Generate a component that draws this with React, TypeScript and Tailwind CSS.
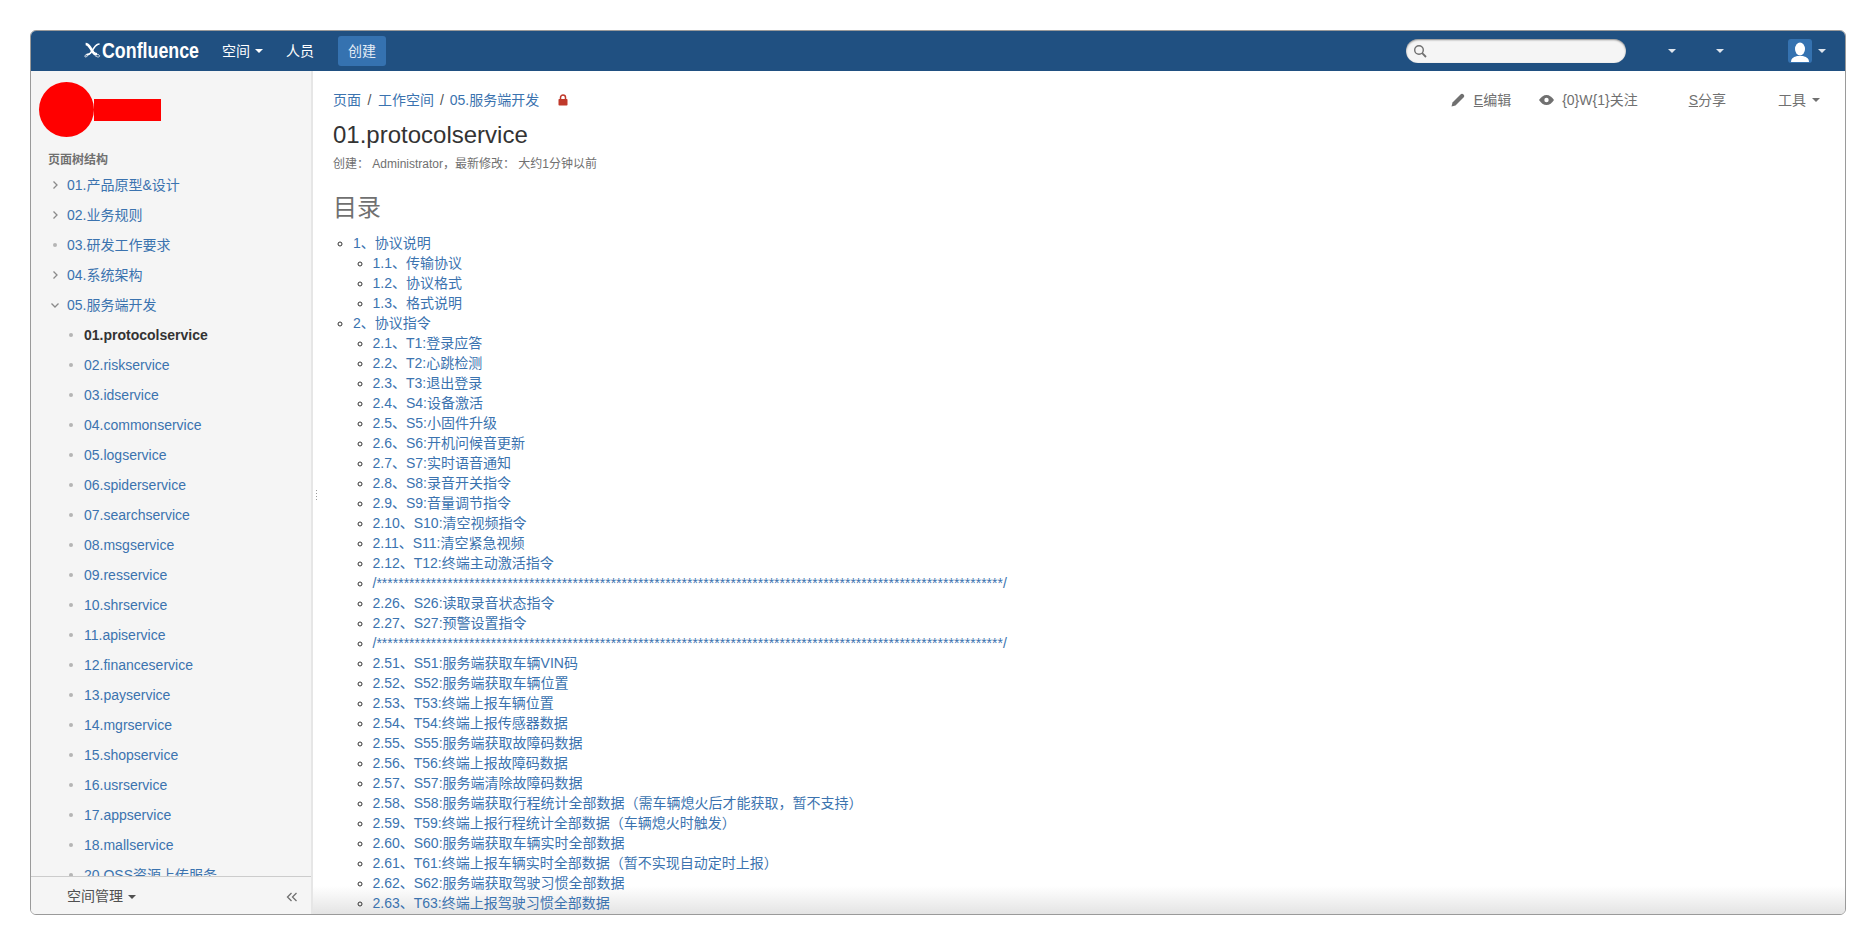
import React from "react";

const font = { fontFamily: '"Liberation Sans", "Noto Sans CJK SC", sans-serif' };

const treeTop: [string, "chev" | "dot" | "open"][] = [
  ["01.产品原型&设计", "chev"],
  ["02.业务规则", "chev"],
  ["03.研发工作要求", "dot"],
  ["04.系统架构", "chev"],
  ["05.服务端开发", "open"],
];
const treeSub = [
  "01.protocolservice", "02.riskservice", "03.idservice", "04.commonservice", "05.logservice",
  "06.spiderservice", "07.searchservice", "08.msgservice", "09.resservice", "10.shrservice",
  "11.apiservice", "12.financeservice", "13.payservice", "14.mgrservice", "15.shopservice",
  "16.usrservice", "17.appservice", "18.mallservice", "20.OSS资源上传服务",
];
const stars = "/" + "*".repeat(115) + "/";
const sec2 = [
  "2.1、T1:登录应答", "2.2、T2:心跳检测", "2.3、T3:退出登录", "2.4、S4:设备激活", "2.5、S5:小固件升级",
  "2.6、S6:开机问候音更新", "2.7、S7:实时语音通知", "2.8、S8:录音开关指令", "2.9、S9:音量调节指令",
  "2.10、S10:清空视频指令", "2.11、S11:清空紧急视频", "2.12、T12:终端主动激活指令", stars,
  "2.26、S26:读取录音状态指令", "2.27、S27:预警设置指令", stars, "2.51、S51:服务端获取车辆VIN码",
  "2.52、S52:服务端获取车辆位置", "2.53、T53:终端上报车辆位置", "2.54、T54:终端上报传感器数据",
  "2.55、S55:服务端获取故障码数据", "2.56、T56:终端上报故障码数据", "2.57、S57:服务端清除故障码数据",
  "2.58、S58:服务端获取行程统计全部数据（需车辆熄火后才能获取，暂不支持）",
  "2.59、T59:终端上报行程统计全部数据（车辆熄火时触发）", "2.60、S60:服务端获取车辆实时全部数据",
  "2.61、T61:终端上报车辆实时全部数据（暂不实现自动定时上报）", "2.62、S62:服务端获取驾驶习惯全部数据",
  "2.63、T63:终端上报驾驶习惯全部数据",
];

function Caret({ color = "border-t-white" }: { color?: string }) {
  return <span className={`inline-block w-0 h-0 border-x-[4px] border-x-transparent border-t-[4px] ${color}`} />;
}

function TreeIcon({ kind }: { kind: "chev" | "dot" | "open" }) {
  if (kind === "dot") return <span className="w-[4px] h-[4px] mx-[3px] rounded-full bg-[#b5b5b5]" />;
  return (
    <svg width="10" height="10" viewBox="0 0 10 10" fill="none" stroke="#8a8a8a" strokeWidth="1.3">
      {kind === "chev" ? <path d="M3.5 1.5 7 5 3.5 8.5" /> : <path d="M1.5 3.5 5 7 8.5 3.5" />}
    </svg>
  );
}

export default function App() {
  return (
    <div className="min-h-[945px] bg-white pt-[30px] pl-[30px] pr-[30px]" style={font}>
      <div className="h-[885px] border border-[#9a9a9a] rounded-[6px] overflow-hidden flex flex-col">
        <header className="h-[40px] shrink-0 bg-[#205081] flex items-center text-white text-[14px]">
          <div className="flex items-center ml-[53px] w-[138px] shrink-0 whitespace-nowrap">
            <svg width="23" height="20" viewBox="0 0 21 19" fill="none" stroke="white">
              <path d="M2 1c3 0 4 2 6 5l3 5c1 1.500 3 2.500 5 2.500" strokeWidth="3.200" />
              <path d="M19 1c-3 0-5 2-7 5l-4 6c-1 1.500-3 2-5 2" strokeWidth="2" />
              <path d="M6 13c-1 3-5 5-5 3s2-2 5-3zM12 13c1 3 6 5 7 3s-3-2.500-7-3z" strokeWidth="1" />
            </svg>
            <span className="text-[22px] font-bold leading-none ml-[1px] scale-x-[0.81] origin-left">Confluence</span>
          </div>
          <span>空间</span>
          <span className="ml-[5px] flex"><Caret /></span>
          <span className="ml-[23px]">人员</span>
          <span className="ml-[24px] w-[48px] h-[30px] rounded-[3px] bg-[#3572b0] flex items-center justify-center text-[#e4edf6]">创建</span>
          <div className="ml-auto w-[220px] h-[24px] rounded-[12px] bg-[#f5f5f5] shadow-[inset_0_1px_2px_rgba(0,0,0,0.45)] flex items-center pl-[7px]">
            <svg width="15" height="15" viewBox="0 0 15 15" fill="none" stroke="#707070" strokeWidth="1.4">
              <circle cx="6" cy="6" r="4.3" />
              <path d="M9.2 9.2 13 13" strokeWidth="1.8" />
            </svg>
          </div>
          <span className="ml-[42px] flex"><Caret color="border-t-[#dfe6ee]" /></span>
          <span className="ml-[40px] flex"><Caret color="border-t-[#dfe6ee]" /></span>
          <span className="ml-[64px] w-[24px] h-[24px] rounded-[3px] bg-[#3572b0] flex items-end justify-center overflow-hidden">
            <svg width="20" height="22" viewBox="0 0 20 22" fill="white">
              <ellipse cx="10" cy="8" rx="5" ry="6.5" />
              <path d="M1 21c0-4 3-5 6-6h6c3 1 6 2 6 6z" />
            </svg>
          </span>
          <span className="ml-[6px] mr-[19px] flex"><Caret color="border-t-[#dfe6ee]" /></span>
        </header>

        <div className="flex-1 flex min-h-0">
          <aside className="w-[282px] shrink-0 bg-[#f5f5f5] border-r-2 border-[#e6e6e6] flex flex-col">
            <div className="flex-1 min-h-0 overflow-hidden">
              <div className="flex items-center ml-[8px] mt-[11px]">
                <div className="w-[55px] h-[55px] rounded-full bg-[#ff0000]" />
                <div className="w-[67px] h-[22px] bg-[#ff0000]" />
              </div>
              <div className="ml-[17px] mt-[15px] text-[12px] leading-[16px] font-bold text-[#707070]">页面树结构</div>
              <div className="mt-[2px]">
                {treeTop.map(([t, k]) => (
                  <div key={t} className="h-[30px] flex items-center pl-[19px] text-[14px] text-[#3b73af]">
                    <span className="w-[17px] flex items-center"><TreeIcon kind={k} /></span>
                    {t}
                  </div>
                ))}
                {treeSub.map((t, i) => (
                  <div key={t} className={`h-[30px] flex items-center pl-[38px] text-[14px] ${i === 0 ? "font-bold text-[#333333]" : "text-[#3b73af]"}`}>
                    <span className="w-[15px] flex items-center"><span className="w-[4px] h-[4px] rounded-full bg-[#b5b5b5]" /></span>
                    {t}
                  </div>
                ))}
              </div>
            </div>
            <div className="h-[38px] shrink-0 border-t border-[#cccccc] flex items-center pt-[2px] pl-[36px] pr-[13px] text-[14px] text-[#505050]">
              <span>空间管理</span>
              <span className="ml-[5px] flex"><Caret color="border-t-[#505050]" /></span>
              <svg className="ml-auto" width="12" height="10" viewBox="0 0 12 10" fill="none" stroke="#707070" strokeWidth="1.3">
                <path d="M5.5 1 1.5 5l4 4M10.5 1 6.500 5l4 4" />
              </svg>
            </div>
          </aside>

          <main className="relative flex-1 min-w-0 overflow-hidden text-[14px] text-[#333333]">
            <div className="absolute left-0 right-0 bottom-0 h-[28px] bg-gradient-to-b from-transparent to-[#e4e4e4]" />
            <div className="absolute left-[3px] top-[419px] flex flex-col gap-[2px]">
              <span className="w-[1px] h-[1px] bg-[#999999]" />
              <span className="w-[1px] h-[1px] bg-[#999999]" />
              <span className="w-[1px] h-[1px] bg-[#999999]" />
              <span className="w-[1px] h-[1px] bg-[#999999]" />
            </div>
            <div className="relative pl-[20px] pr-[24px]">
              <div className="flex items-center h-[20px] mt-[19px]">
                <a className="text-[#3b73af]">页面</a>
                <span className="mx-[6.5px] text-[#505050]">/</span>
                <a className="text-[#3b73af]">工作空间</a>
                <span className="mx-[6px] text-[#505050]">/</span>
                <a className="text-[#3b73af]">05.服务端开发</a>
                <svg className="ml-[19px]" width="10" height="12" viewBox="0 0 10 12" fill="none">
                  <path d="M2.500 5V3.500a2.500 2.500 0 0 1 5 0V5" stroke="#c0392b" strokeWidth="1.5" />
                  <rect x="0.500" y="5" width="9" height="6.500" rx="0.800" fill="#c0392b" />
                </svg>
                <div className="ml-auto flex items-center text-[#707070]">
                  <svg width="14" height="14" viewBox="0 0 14 14" fill="#707070">
                    <path d="M0.500 13.500 1.500 9.500 9.500 1.500c1-1 2-1 3 0s1 2 0 3l-8 8z" />
                  </svg>
                  <span className="ml-[9px]"><span className="underline">E</span>编辑</span>
                  <svg className="ml-[28px]" width="15" height="10" viewBox="0 0 15 10">
                    <path d="M0 5c2-3 4.500-5 7.500-5S13 2 15 5c-2 3-4.500 5-7.500 5S2 8 0 5z" fill="#707070" />
                    <circle cx="7.500" cy="5" r="2.200" fill="white" />
                  </svg>
                  <span className="ml-[8px]">{"{0}W{1}关注"}</span>
                  <span className="ml-[51px]"><span className="underline">S</span>分享</span>
                  <span className="ml-[52px]">工具</span>
                  <span className="ml-[6px] mr-[1px] flex"><Caret color="border-t-[#707070]" /></span>
                </div>
              </div>
              <h1 className="text-[24px] leading-[30px] mt-[10px] text-[#333333]">01.protocolservice</h1>
              <div className="text-[12px] leading-[16px] mt-[6px] text-[#707070] whitespace-pre">创建： Administrator，最新修改： 大约1分钟以前</div>
              <h2 className="text-[24px] leading-[30px] mt-[21px] text-[#707070]">目录</h2>
              <ul className="list-[circle] pl-[20px] mt-[10px] leading-[20px]">
                <li>
                  <a className="text-[#3b73af]">1、协议说明</a>
                  <ul className="list-[circle] pl-[19.500px]">
                    {["1.1、传输协议", "1.2、协议格式", "1.3、格式说明"].map((t) => (
                      <li key={t}><a className="text-[#3b73af]">{t}</a></li>
                    ))}
                  </ul>
                </li>
                <li>
                  <a className="text-[#3b73af]">2、协议指令</a>
                  <ul className="list-[circle] pl-[19.500px]">
                    {sec2.map((t, i) => (
                      <li key={i}><a className="text-[#3b73af]">{t}</a></li>
                    ))}
                  </ul>
                </li>
              </ul>
            </div>
          </main>
        </div>
      </div>
    </div>
  );
}
